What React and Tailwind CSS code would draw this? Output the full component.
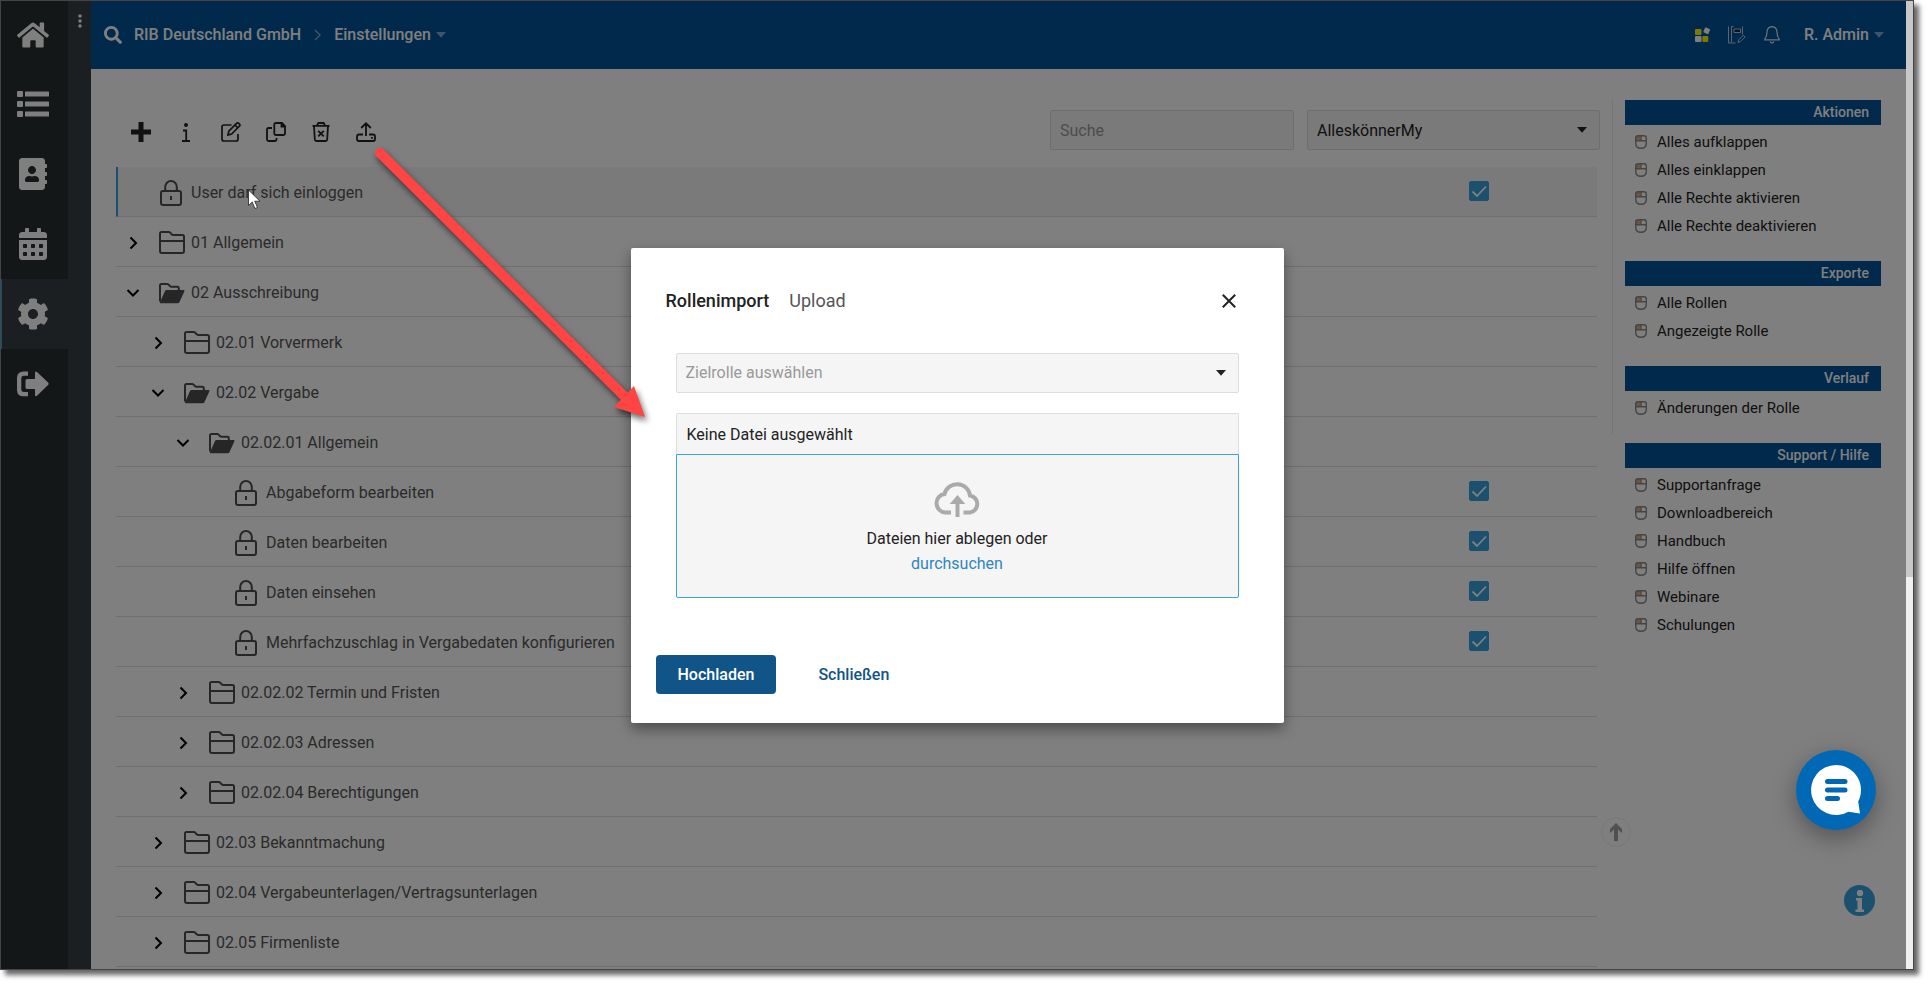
import { useState } from "react";
import { FaHome, FaAddressBook, FaCalendarAlt, FaCog, FaSearch } from "react-icons/fa";

const treeRows = [
  { label: "User darf sich einloggen", level: 0, type: "right", selected: true },
  { label: "01 Allgemein", level: 0, type: "closed" },
  { label: "02 Ausschreibung", level: 0, type: "open" },
  { label: "02.01 Vorvermerk", level: 1, type: "closed" },
  { label: "02.02 Vergabe", level: 1, type: "open" },
  { label: "02.02.01 Allgemein", level: 2, type: "open" },
  { label: "Abgabeform bearbeiten", level: 3, type: "right" },
  { label: "Daten bearbeiten", level: 3, type: "right" },
  { label: "Daten einsehen", level: 3, type: "right" },
  { label: "Mehrfachzuschlag in Vergabedaten konfigurieren", level: 3, type: "right" },
  { label: "02.02.02 Termin und Fristen", level: 2, type: "closed" },
  { label: "02.02.03 Adressen", level: 2, type: "closed" },
  { label: "02.02.04 Berechtigungen", level: 2, type: "closed" },
  { label: "02.03 Bekanntmachung", level: 1, type: "closed" },
  { label: "02.04 Vergabeunterlagen/Vertragsunterlagen", level: 1, type: "closed" },
  { label: "02.05 Firmenliste", level: 1, type: "closed" },
];

const indents = ["pl-0", "pl-[25px]", "pl-[50px]", "pl-[75px]"];

const actionGroups = [
  {
    title: "Aktionen",
    items: ["Alles aufklappen", "Alles einklappen", "Alle Rechte aktivieren", "Alle Rechte deaktivieren"],
  },
  { title: "Exporte", items: ["Alle Rollen", "Angezeigte Rolle"] },
  { title: "Verlauf", items: ["Änderungen der Rolle"] },
];

const supportGroup = {
  title: "Support / Hilfe",
  items: ["Supportanfrage", "Downloadbereich", "Handbuch", "Hilfe öffnen", "Webinare", "Schulungen"],
};

function ListIcon() {
  return (
    <svg width="32" height="27" viewBox="0 0 32 27" fill="currentColor">
      <rect x="0" y="0" width="6" height="6" rx="1" />
      <rect x="0" y="10" width="6" height="6" rx="1" />
      <rect x="0" y="20" width="6" height="6" rx="1" />
      <rect x="8" y="0.5" width="24" height="5" rx="0.5" />
      <rect x="8" y="10.5" width="24" height="5" rx="0.5" />
      <rect x="8" y="20.5" width="24" height="5" rx="0.5" />
    </svg>
  );
}

function LogoutIcon() {
  return (
    <svg width="32" height="26" viewBox="0 0 32 26" fill="currentColor">
      <path d="M11 0.5v4.3H7Q4.3 4.8 4.3 7.5v10.8Q4.3 21 7 21h4v4.3H6.5Q0 25.3 0 19V7Q0 0.5 6.5 0.5z" />
      <path d="M8.5 9.5Q8.5 8 10 8h8V2Q18 -0.5 20 1L31.3 11.8Q32 12.8 31.3 13.8L20 24.8Q18 26 18 24v-6h-8Q8.5 18 8.5 16.5z" />
    </svg>
  );
}

function LockIcon() {
  return (
    <svg width="22" height="26" viewBox="0 0 22 26" fill="none" stroke="currentColor" strokeWidth="2">
      <rect x="1" y="11" width="20" height="14" rx="2" />
      <path d="M5.2 11V7a5.8 6 0 0 1 11.6 0v4" />
      <path d="M11 16v4" />
    </svg>
  );
}

function FolderIcon() {
  return (
    <svg width="26" height="23" viewBox="0 0 26 23" fill="none" stroke="currentColor" strokeWidth="2">
      <path d="M1 20V2.6Q1 1 2.6 1h7.2q.8 0 1.4.7L13 3.5q.5.5 1.3.5h8.9Q25 4 25 5.6V20q0 2-2 2H3q-2 0-2-2z" />
      <path d="M1 10h24" />
    </svg>
  );
}

function FolderOpenIcon() {
  return (
    <svg width="26" height="21" viewBox="0 0 26 21">
      <path
        d="M1 18.5V2.6Q1 1 2.6 1h5.6q.8 0 1.4.6l1.6 1.7q.5.5 1.3.5h5.9q1.4 0 1.4 1.4V7"
        fill="none"
        stroke="currentColor"
        strokeWidth="2"
      />
      <path d="M7.5 7h17q1.500 0 .9 1.300l-5 11q-.5 1-1.600 1H1.500q-1 0-.5-1.100L6 8q.5-1 1.500-1z" fill="currentColor" />
    </svg>
  );
}

function ChevronIcon({ open }) {
  return (
    <svg width="14" height="14" viewBox="0 0 14 14" fill="none" stroke="currentColor" strokeWidth="2">
      {open ? <path d="M1.5 4L7 9.5 12.5 4" /> : <path d="M4.5 1.5L10 7l-5.5 5.5" />}
    </svg>
  );
}

function MouseIcon() {
  return (
    <svg width="12" height="14" viewBox="0 0 12 14" fill="none" stroke="#8a8a8a" strokeWidth="1.4">
      <rect x="1" y="1" width="4.5" height="4.5" fill="#e9a77a" stroke="none" />
      <path d="M0.700 3Q0.700 0.700 3 0.700h6Q11.300 0.700 11.300 3v5q0 5.300-5.300 5.300T0.700 8z" />
      <path d="M0.700 5.800h10.600M6 0.700v5" />
    </svg>
  );
}

function Caret({ className }) {
  return (
    <svg className={className} width="10" height="6" viewBox="0 0 10 6" fill="currentColor">
      <path d="M0 0h10L5 5.8z" />
    </svg>
  );
}

function Toolbar() {
  const button = "flex size-5 items-center justify-center";
  return (
    <div className="flex items-center gap-[25px] pt-1 pl-[15px] text-[#222]">
      <button type="button" aria-label="Neu" className={button}>
        <svg width="20" height="20" viewBox="0 0 20 20" stroke="currentColor" strokeWidth="5">
          <path d="M10 0v20M0 10h20" />
        </svg>
      </button>
      <button type="button" aria-label="Info" className={button}>
        <svg width="8" height="19" viewBox="0 0 8 19" fill="none" stroke="currentColor" strokeWidth="1.8">
          <circle cx="4" cy="2" r="2" fill="currentColor" stroke="none" />
          <path d="M1 7.500h3.200V18M0 18h8" />
        </svg>
      </button>
      <button type="button" aria-label="Bearbeiten" className={button}>
        <svg width="20" height="20" viewBox="0 0 20 20" fill="none" stroke="currentColor" strokeWidth="1.7">
          <path d="M10.500 3H3Q1 3 1 5v12q0 2 2 2h12q2 0 2-2v-5" />
          <path d="M7 13l.8-3.800 8-8q.9-.7 1.900.2l.7.700q1 1 .2 1.900l-8 8z" />
          <path d="M14 3l3 3" />
        </svg>
      </button>
      <button type="button" aria-label="Kopieren" className={button}>
        <svg width="20" height="20" viewBox="0 0 20 20" fill="none" stroke="currentColor" strokeWidth="1.8">
          <path d="M10 1h6l3 3v7.500q0 1.500-1.500 1.500h-7.500Q8.300 13 8.300 11.500V2.500Q8.300 1 10 1z" />
          <path d="M15.500 0.800v3.700h3.700" fill="currentColor" />
          <path d="M6 6H2.500Q1 6 1 7.500v10Q1 19 2.500 19H9q1.500 0 1.500-1.500V16" />
        </svg>
      </button>
      <button type="button" aria-label="Löschen" className={button}>
        <svg width="18" height="20" viewBox="0 0 18 20" fill="none" stroke="currentColor" strokeWidth="1.8">
          <path d="M0.500 3.800h17M5 3.500L6.300 1h5.400L13 3.500" />
          <path d="M2 4l.8 13.500Q3 19 4.300 19h9.400q1.300 0 1.500-1.500L16 4" />
          <path d="M6.200 8.800l5.600 5.600M11.800 8.800l-5.600 5.600" />
        </svg>
      </button>
      <button type="button" aria-label="Importieren" className={button}>
        <svg width="20" height="20" viewBox="0 0 20 20" fill="none" stroke="currentColor" strokeWidth="1.8">
          <path d="M10 14V1.500M5.200 6L10 1.300 14.800 6" />
          <path d="M7 12.500H3Q1 12.500 1 14.500V17q0 2 2 2h14q2 0 2-2v-2.500q0-2-2-2h-4" />
          <path d="M15 15.800h1.800" />
        </svg>
      </button>
    </div>
  );
}

function TreeRow({ row }) {
  const [checked, setChecked] = useState(true);
  const isRight = row.type === "right";

  return (
    <li
      className={
        row.selected
          ? "flex h-[50px] shrink-0 items-center border-b border-l-2 border-b-[#dedede] border-l-[#36a3dc] bg-[#f5f5f5] pr-[108px]"
          : "flex h-[50px] shrink-0 items-center border-b border-b-[#dedede] pr-[108px] pl-0.5"
      }
    >
      <div className={indents[row.level]}>
        <div className="flex items-center pt-0.5">
          <div className="flex w-[41px] pl-2 text-black">
            {!isRight && (
              <button type="button" aria-label={row.label + " umschalten"}>
                <ChevronIcon open={row.type === "open"} />
              </button>
            )}
          </div>
          <div className="flex w-8 text-[#4c4c4c]">
            {isRight && <span className="pl-px"><LockIcon /></span>}
            {row.type === "closed" && <FolderIcon />}
            {row.type === "open" && <span className="pt-0.5"><FolderOpenIcon /></span>}
          </div>
          <span className="text-base text-[#555]">{row.label}</span>
        </div>
      </div>
      {isRight && (
        <label className="mb-0.5 ml-auto grid size-5">
          <input
            type="checkbox"
            aria-label={row.label}
            checked={checked}
            onChange={(e) => setChecked(e.target.checked)}
            className="peer col-start-1 row-start-1 size-5 appearance-none rounded-xs border border-[#36a3dc] checked:bg-[#36a3dc]"
          />
          <svg
            viewBox="0 0 20 20"
            className="pointer-events-none col-start-1 row-start-1 hidden size-5 peer-checked:block"
            fill="none"
            stroke="#fff"
            strokeWidth="1.8"
          >
            <path d="M3.500 10.500l4.500 4.500 9-9.500" />
          </svg>
        </label>
      )}
    </li>
  );
}

function ActionGroup({ group }) {
  return (
    <section>
      <h2 className="h-[25px] bg-[#005296] pr-3 text-right text-sm leading-[25px] font-medium text-white">
        {group.title}
      </h2>
      <ul className="mt-[3px]">
        {group.items.map((item) => (
          <li key={item}>
            <a href="#" className="flex h-7 items-center gap-[10px] pl-[10px] text-[15px] text-[#222]">
              <MouseIcon />
              {item}
            </a>
          </li>
        ))}
      </ul>
    </section>
  );
}

function Sidebar() {
  const item = "flex h-[70px] w-full items-center justify-center pr-[3px]";
  return (
    <nav className="flex shrink-0 bg-[#363e44] text-white">
      <div className="w-[67px] bg-[#262e2e]">
        <a href="#" aria-label="Start" className="flex h-[68px] w-full items-center justify-center pr-[3px]">
          <FaHome size={32} />
        </a>
        <a href="#" aria-label="Listen" className={item}><ListIcon /></a>
        <a href="#" aria-label="Adressen" className={item}><FaAddressBook size={32} /></a>
        <a href="#" aria-label="Kalender" className={item}><FaCalendarAlt size={32} /></a>
        <a
          href="#"
          aria-label="Einstellungen"
          className="flex h-[70px] w-full items-center justify-center border-l border-[#36a3dc] bg-[#363e44] pr-1"
        >
          <FaCog size={32} />
        </a>
        <a href="#" aria-label="Abmelden" className={item}><LogoutIcon /></a>
      </div>
      <div className="flex w-[23px] justify-center pt-[13px]">
        <svg width="4" height="14" viewBox="0 0 4 14" fill="currentColor">
          <circle cx="2" cy="2" r="1.7" />
          <circle cx="2" cy="7" r="1.7" />
          <circle cx="2" cy="12" r="1.7" />
        </svg>
      </div>
    </nav>
  );
}

function Header() {
  return (
    <header className="flex h-[68px] shrink-0 items-center bg-[#005296] pr-[22px] pl-[13px] text-base font-medium text-white">
      <FaSearch size={18} />
      <a href="#" className="ml-3">RIB Deutschland GmbH</a>
      <svg className="mx-[13px]" width="7" height="12" viewBox="0 0 7 12" fill="none" stroke="#7fa8ca" strokeWidth="1.5">
        <path d="M1 1l5 5-5 5" />
      </svg>
      <button type="button" className="flex items-center gap-[5px]">
        Einstellungen
        <Caret className="text-[#7fa8ca]" />
      </button>
      <div className="ml-auto flex items-center">
        <svg width="16" height="16" viewBox="0 0 16 16">
          <rect x="0" y="2" width="6.500" height="6" rx="1" fill="#fff200" />
          <rect x="0" y="9" width="6.500" height="6" rx="1" fill="#fff" />
          <rect x="7.300" y="9" width="6" height="6" rx="1" fill="#fff200" />
          <rect x="9" y="1" width="5.500" height="5.500" rx="1" fill="#fff" transform="rotate(25 11.700 3.700)" />
        </svg>
        <svg className="ml-[17px]" width="18" height="18" viewBox="0 0 18 18" fill="none" stroke="#b3cbe0">
          <path d="M0.500 0.500v16.500h7M3.500 0.500v16M14.500 0.500v8M3.500 0.500h2" />
          <path d="M6 3h6.500v3.500H6z" fill="#123" />
          <path d="M10 16.500l.8-2.800 4.500-4.500 1.800 1.800-4.500 4.500z" />
        </svg>
        <svg className="ml-[18px]" width="16" height="18" viewBox="0 0 16 18" fill="none" stroke="#dbe7f1" strokeWidth="1.2">
          <path d="M8 0.600q5 .4 5 5.600 0 4.500 2.200 6.800v.8H.8V13Q3 10.700 3 6.200 3 1 8 .6z" />
          <path d="M6.300 15.500q.4 1.500 1.700 1.500t1.700-1.500" />
        </svg>
        <button type="button" className="ml-6 flex items-center gap-[5px]">
          R. Admin
          <Caret className="text-[#7fa8ca]" />
        </button>
      </div>
    </header>
  );
}

function UploadDialog() {
  return (
    <div
      role="dialog"
      aria-labelledby="dialog-title"
      className="w-[653px] rounded-xs bg-white px-[25px] pt-9 pb-[29px] shadow-[0_6px_14px_rgba(0,0,0,0.4)]"
    >
      <div className="flex h-[35px] items-center gap-5 pr-[22px] pl-[10px] text-lg">
        <h1 id="dialog-title" className="font-medium text-[#222]">Rollenimport</h1>
        <span className="text-[#555]">Upload</span>
        <button type="button" aria-label="Dialog verlassen" className="ml-auto p-px text-[#222]">
          <svg width="14" height="14" viewBox="0 0 14 14" stroke="currentColor" strokeWidth="2">
            <path d="M0.800 0.800l12.400 12.400M13.200 0.800L0.800 13.200" />
          </svg>
        </button>
      </div>

      <div className="mt-[34px] px-5">
        <div className="grid items-center">
          <select
            aria-label="Zielrolle"
            defaultValue=""
            className="col-start-1 row-start-1 h-10 w-full appearance-none rounded-xs border border-[#ddd] bg-[#f5f5f5] px-[9px] pt-px text-base text-[#999]"
          >
            <option value="">Zielrolle auswählen</option>
          </select>
          <Caret className="pointer-events-none col-start-1 row-start-1 mr-[13px] justify-self-end text-[#222]" />
        </div>

        <p className="mt-5 h-[41px] rounded-t-xs border border-b-0 border-[#ddd] bg-[#f5f5f5] px-[10px] text-base leading-[41px] text-[#222]">
          Keine Datei ausgewählt
        </p>
        <div className="flex h-36 flex-col items-center rounded-b-xs border border-[#36a3dc] bg-[#f5f5f5] pt-[26px] text-base leading-[25px] text-[#222]">
          <svg width="47" height="37" viewBox="0 0 47 37" fill="none" stroke="#aaa" strokeWidth="4">
            <path d="M17 31.500h-5.500A9.300 9.300 0 0 1 10.500 13 13 13 0 0 1 36 14.500 8.600 8.600 0 0 1 36 31.500H29.500" />
            <path d="M23.500 36V20" />
            <path d="M23.500 14l-7.800 9h15.600z" fill="#aaa" stroke="none" />
          </svg>
          <p className="mt-2">Dateien hier ablegen oder</p>
          <button type="button" className="text-[#2d86c3]">durchsuchen</button>
        </div>
      </div>

      <div className="mt-[57px] flex items-center gap-5 text-base font-medium">
        <button type="button" className="h-[39px] rounded-sm bg-[#115488] px-[22px] pt-px text-white">Hochladen</button>
        <button type="button" className="h-[39px] px-[22px] pt-px text-[#115488]">Schließen</button>
      </div>
    </div>
  );
}

export default function App() {
  return (
    <div className="h-screen bg-white pr-[15px] pb-[15px] font-[Roboto,sans-serif]">
      <div className="relative flex h-full overflow-hidden border border-[#444] bg-white shadow-[5px_5px_5px_rgba(0,0,0,0.6)]">
        <Sidebar />

        <div className="flex min-w-0 flex-1 flex-col">
          <Header />
          <div className="flex min-h-0 flex-1">
            <main className="flex min-w-0 flex-1 flex-col pt-[41px] pr-3 pl-[25px]">
              <div className="flex h-10 shrink-0 items-center">
                <Toolbar />
                <input
                  type="search"
                  aria-label="Suche"
                  placeholder="Suche"
                  className="ml-auto h-10 w-[244px] rounded-xs border border-[#ddd] bg-[#f5f5f5] px-[9px] text-base placeholder:text-[#999]"
                />
                <div className="ml-[13px] grid w-[293px] items-center">
                  <select
                    aria-label="Rolle"
                    className="col-start-1 row-start-1 h-10 w-full appearance-none rounded-xs border border-[#ddd] bg-[#f5f5f5] px-[9px] pt-px text-base text-[#222]"
                  >
                    <option>AlleskönnerMy</option>
                  </select>
                  <Caret className="pointer-events-none col-start-1 row-start-1 mr-[13px] justify-self-end text-[#222]" />
                </div>
              </div>
              <ul className="mt-[17px] mr-[3px] flex min-h-0 flex-1 flex-col overflow-hidden">
                {treeRows.map((row) => (
                  <TreeRow key={row.label} row={row} />
                ))}
              </ul>
            </main>

            <aside className="w-[294px] shrink-0 pt-[31px] pr-[25px]">
              <div className="flex flex-col gap-[21px] border-l border-[#eaeaea] pb-3 pl-3">
                {actionGroups.map((group) => (
                  <ActionGroup key={group.title} group={group} />
                ))}
              </div>
              <div className="mt-[9px] pl-[13px]">
                <ActionGroup group={supportGroup} />
              </div>
            </aside>
          </div>
        </div>

        <button
          type="button"
          aria-label="Nach oben"
          className="absolute right-[282px] bottom-[122px] flex size-[30px] items-center justify-center rounded-full border border-[#f0f0f0] text-[#a0a0a0]"
        >
          <svg width="12" height="18" viewBox="0 0 12 18" fill="currentColor">
            <path d="M6 0l6 6v4L8 6.500V18H4V6.500L0 10V6z" />
          </svg>
        </button>
        <button
          type="button"
          aria-label="Hilfe"
          className="absolute right-[38px] bottom-[53px] flex size-[31px] items-center justify-center rounded-full bg-[#36a3dc] text-white"
        >
          <svg width="10" height="22" viewBox="0 0 10 22" fill="currentColor">
            <circle cx="5" cy="3" r="3.2" />
            <path d="M1 8h6v11.500h2V22H.5v-2.500h2v-9H1z" />
          </svg>
        </button>

        <div className="w-[7px] shrink-0 bg-[#f0f0f0]">
          <div className="h-[59.5%] bg-[#c8c8c8]" />
        </div>

        <div className="absolute inset-y-0 right-[7px] left-0 bg-black/50" />
        <div className="absolute inset-0 flex items-center justify-center">
          <UploadDialog />
        </div>

        <button
          type="button"
          aria-label="Chat"
          className="absolute right-[37px] bottom-[139px] flex size-20 items-center justify-center rounded-full bg-[#0068b4] shadow-[0_8px_24px_rgba(0,0,0,0.35)]"
        >
          <svg width="50" height="50" viewBox="0 0 50 50">
            <path d="M25 0a25 25 0 0 1 22.200 36.500L49 48.500 37.500 46.700A25 25 0 1 1 25 0z" fill="#fff" />
            <path d="M16.500 16.500h17.500M16.500 25h17.500M16.500 33.500h10" stroke="#0068b4" strokeWidth="5" strokeLinecap="round" />
          </svg>
        </button>

        <svg
          className="pointer-events-none absolute top-[145px] left-[370px] drop-shadow-[2px_4px_3px_rgba(0,0,0,0.6)]"
          width="280"
          height="276"
          viewBox="0 0 280 276"
          fill="#ff4444"
        >
          <path d="M9 7L254 251" stroke="#ff4444" strokeWidth="10" strokeLinecap="round" />
          <path d="M274 271L243 261 263 240z" />
        </svg>
        <svg className="pointer-events-none absolute top-[188px] left-[247px]" width="13" height="21" viewBox="0 0 13 21">
          <path d="M0.500 1v15.500l3.700-3.500 2.800 6.500 2.500-1.100-2.800-6.200h5.300z" fill="#fff" stroke="#222" strokeWidth="0.8" />
        </svg>
      </div>
    </div>
  );
}
